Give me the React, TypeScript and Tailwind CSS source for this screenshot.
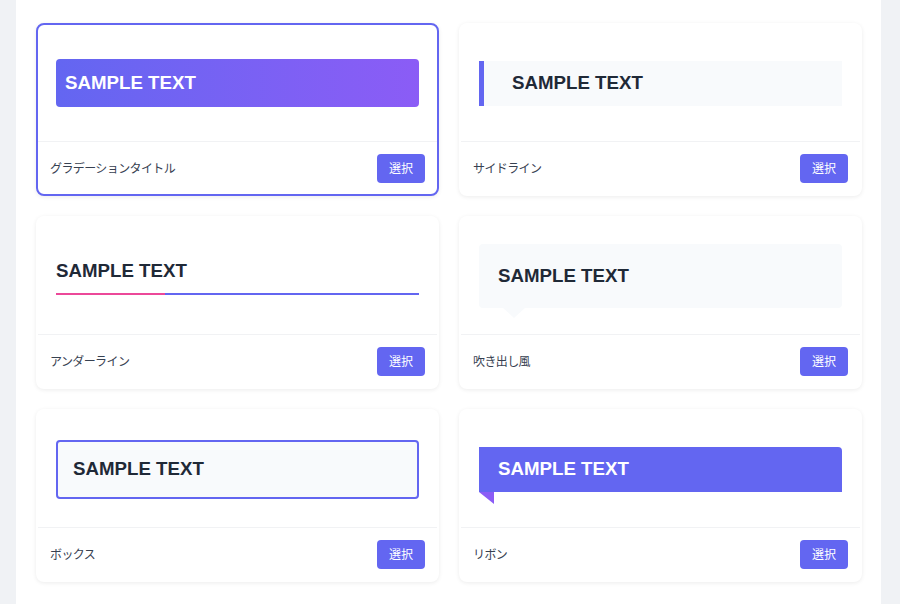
import React from 'react';

const titleFont = "font-['Liberation_Sans',Arial,sans-serif] font-bold text-[18.7px] leading-7";

type Style = { id: string; label: string };

const styles: Style[] = [
    { id: 'gradient', label: 'グラデーションタイトル' },
    { id: 'sideline', label: 'サイドライン' },
    { id: 'underline', label: 'アンダーライン' },
    { id: 'bubble', label: '吹き出し風' },
    { id: 'box', label: 'ボックス' },
    { id: 'ribbon', label: 'リボン' },
];

function Preview(props: { id: string }) {
    const { id } = props;

    if (id === 'gradient') {
        return (
            <div className={`w-full rounded bg-gradient-to-r from-[#6366f1] to-[#8b5cf6] px-[9px] py-2.5 text-white ${titleFont}`}>
                SAMPLE TEXT
            </div>
        );
    }
    if (id === 'sideline') {
        return (
            <div className={`flex h-[45px] w-full items-center border-l-[5px] border-[#6366f1] bg-[#f8fafc] pl-7 text-[#1f2937] ${titleFont}`}>
                SAMPLE TEXT
            </div>
        );
    }
    if (id === 'underline') {
        return (
            <div className="w-full">
                <div className={`pb-2 text-[#1f2937] ${titleFont}`}>SAMPLE TEXT</div>
                <div className="flex h-[2.5px] w-full">
                    <div className="h-full w-[30%] bg-[#ec4899]" />
                    <div className="h-full flex-1 bg-[#6366f1]" />
                </div>
            </div>
        );
    }
    if (id === 'bubble') {
        return (
            <div className="relative w-full">
                <div className={`flex h-16 items-center rounded bg-[#f8fafc] px-[19px] text-[#1f2937] ${titleFont}`}>
                    SAMPLE TEXT
                </div>
                <div className="absolute left-6 top-full h-0 w-0 border-x-[11px] border-t-[10px] border-x-transparent border-t-[#f8fafc]" />
            </div>
        );
    }
    if (id === 'box') {
        return (
            <div className={`flex h-[59px] w-full items-center rounded border-2 border-[#6366f1] bg-[#f8fafc] px-[15px] text-[#1f2937] ${titleFont}`}>
                SAMPLE TEXT
            </div>
        );
    }
    return (
        <div className="relative w-full">
            <div className={`flex h-[45px] items-center rounded-tr-sm bg-[#6366f1] px-[19px] text-white ${titleFont}`}>
                SAMPLE TEXT
            </div>
            <svg className="absolute left-0 top-full" width="15" height="12" viewBox="0 0 15 12">
                <polygon points="0,0 15,0 15,12" fill="#8b5cf6" />
            </svg>
        </div>
    );
}

function StyleCard(props: { item: Style; selected: boolean }) {
    const { item, selected } = props;
    return (
        <div
            className={`flex flex-col rounded-lg border-2 bg-white shadow-[0_1px_4px_rgba(0,0,0,0.08)] ${
                selected ? 'border-[#6366f1]' : 'border-transparent'
            }`}
        >
            <div className="flex h-[116px] items-center px-[18px]">
                <Preview id={item.id} />
            </div>
            <div className="flex h-[53px] items-center justify-between border-t border-[#f1f2f4] px-3">
                <span className="font-['Noto_Sans_CJK_JP',sans-serif] text-[12px] tracking-[-0.6px] text-[#374151]">
                    {item.label}
                </span>
                <button
                    type="button"
                    className="rounded bg-[#6366f1] px-3 py-[6.5px] font-['Noto_Sans_CJK_JP',sans-serif] text-[12px] leading-4 text-white"
                >
                    選択
                </button>
            </div>
        </div>
    );
}

export default function App() {
    return (
        <div className="min-h-screen bg-[#f0f2f5] pl-4 pr-[19px]">
            <div className="min-h-[604px] bg-white pl-5 pr-[19px] pt-[23px] pb-5">
                <div className="grid grid-cols-2 gap-5">
                    {styles.map((item, index) => (
                        <StyleCard key={item.id} item={item} selected={index === 0} />
                    ))}
                </div>
            </div>
        </div>
    );
}
